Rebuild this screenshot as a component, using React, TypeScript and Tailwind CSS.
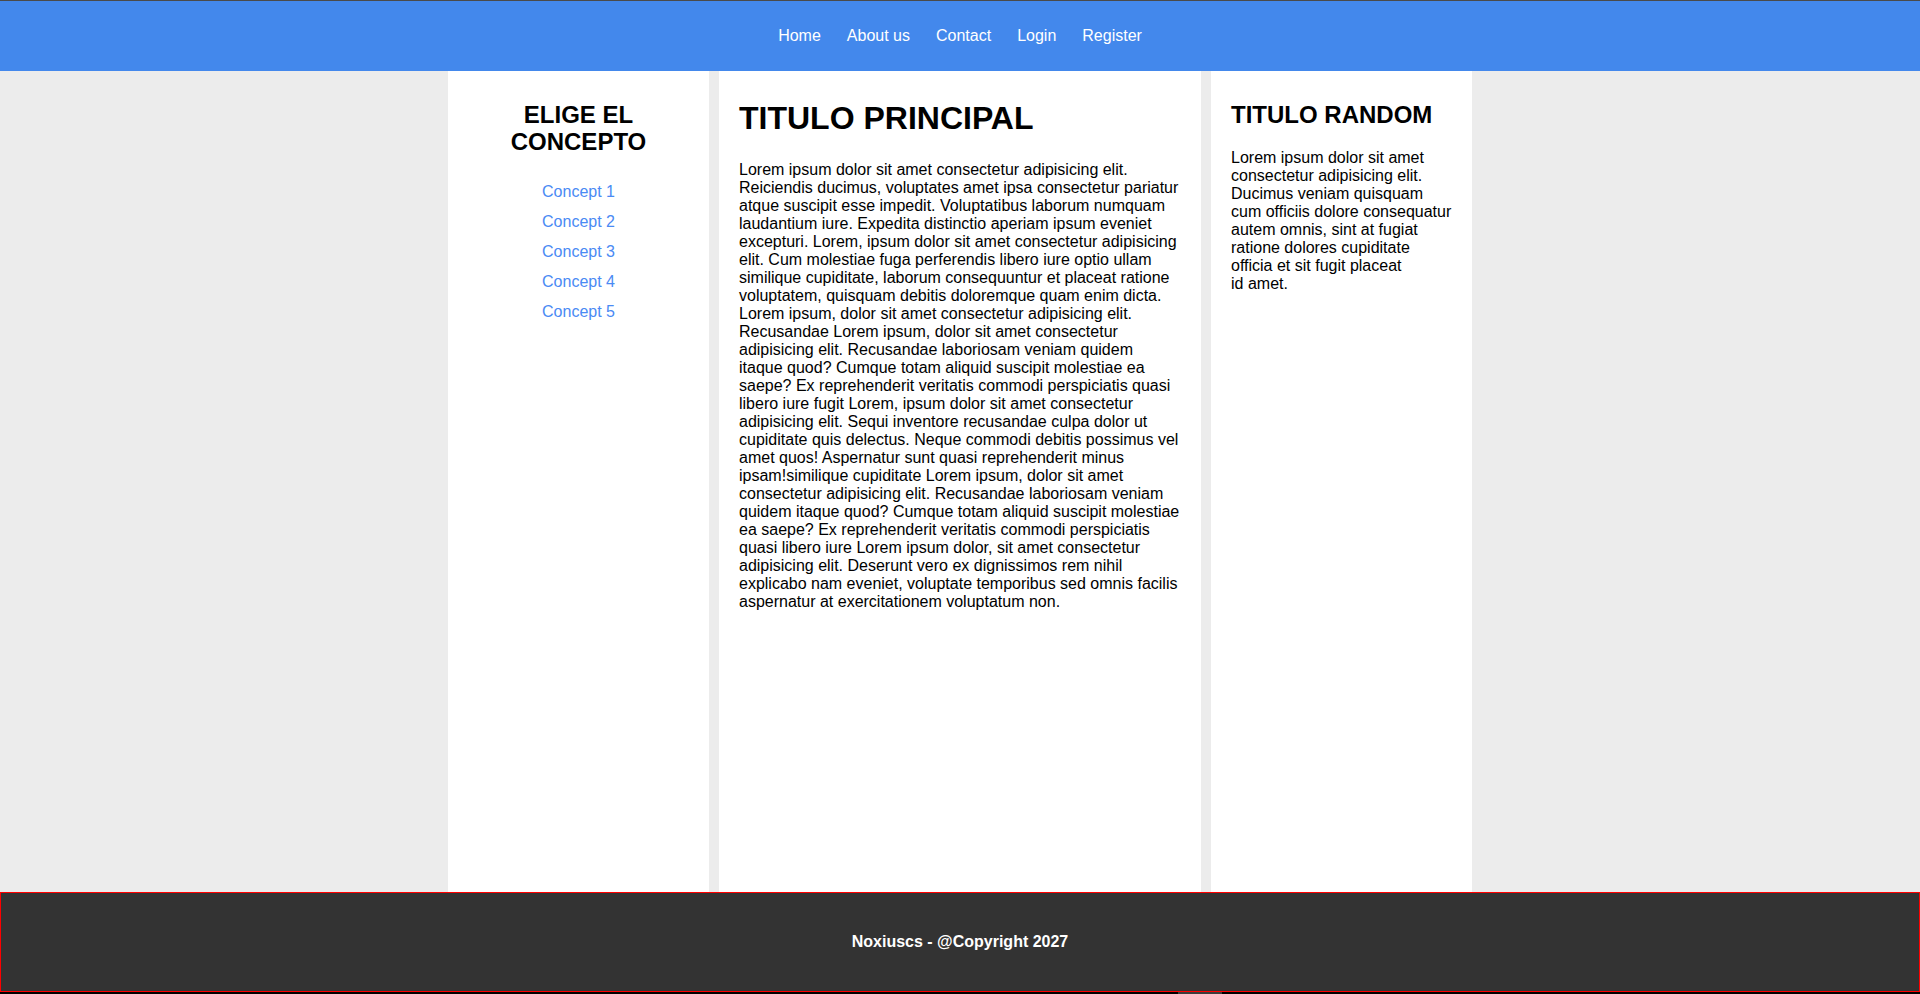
const NAV = ['Home', 'About us', 'Contact', 'Login', 'Register']
const CONCEPTS = ['Concept 1', 'Concept 2', 'Concept 3', 'Concept 4', 'Concept 5']

const MAIN_TEXT =
  'Lorem ipsum dolor sit amet consectetur adipisicing elit. Reiciendis ducimus, voluptates amet ipsa consectetur pariatur atque suscipit esse impedit. Voluptatibus laborum numquam laudantium iure. Expedita distinctio aperiam ipsum eveniet excepturi. Lorem, ipsum dolor sit amet consectetur adipisicing elit. Cum molestiae fuga perferendis libero iure optio ullam similique cupiditate, laborum consequuntur et placeat ratione voluptatem, quisquam debitis doloremque quam enim dicta. Lorem ipsum, dolor sit amet consectetur adipisicing elit. Recusandae Lorem ipsum, dolor sit amet consectetur adipisicing elit. Recusandae laboriosam veniam quidem itaque quod? Cumque totam aliquid suscipit molestiae ea saepe? Ex reprehenderit veritatis commodi perspiciatis quasi libero iure fugit Lorem, ipsum dolor sit amet consectetur adipisicing elit. Sequi inventore recusandae culpa dolor ut cupiditate quis delectus. Neque commodi debitis possimus vel amet quos! Aspernatur sunt quasi reprehenderit minus ipsam!similique cupiditate Lorem ipsum, dolor sit amet consectetur adipisicing elit. Recusandae laboriosam veniam quidem itaque quod? Cumque totam aliquid suscipit molestiae ea saepe? Ex reprehenderit veritatis commodi perspiciatis quasi libero iure Lorem ipsum dolor, sit amet consectetur adipisicing elit. Deserunt vero ex dignissimos rem nihil explicabo nam eveniet, voluptate temporibus sed omnis facilis aspernatur at exercitationem voluptatum non.'

export default function App() {
  return (
    <div className="flex h-screen flex-col bg-[#ececec] font-['Liberation_Sans',Arial,sans-serif] text-black">
      {/* cabecera */}
      <header className="flex h-[71px] flex-none items-center justify-center border-t border-[#4a4a4a] bg-[#4388ec]">
        <nav className="flex items-center gap-[26px] text-[16px] leading-[18px] text-white">
          {NAV.map((item) => (
            <a key={item} href="#">
              {item}
            </a>
          ))}
        </nav>
      </header>

      {/* columnas */}
      <main className="flex flex-1 justify-center gap-[10px]">
        <aside className="w-[261px] bg-white px-5 pt-[10px] text-center">
          <h2 className="mt-[20px] mb-[22px] text-[24px] font-bold leading-[27px]">ELIGE EL CONCEPTO</h2>
          <ul>
            {CONCEPTS.map((c) => (
              <li key={c} className="py-[6px] text-[16px] leading-[18px]">
                <a href="#" className="text-[#4a8af4]">
                  {c}
                </a>
              </li>
            ))}
          </ul>
        </aside>

        <section className="w-[482px] bg-white px-5 pt-[8px]">
          <h1 className="mt-[21px] mb-[24px] text-[32px] font-bold leading-[37px]">TITULO PRINCIPAL</h1>
          <p className="text-[16px] leading-[18px]">{MAIN_TEXT}</p>
        </section>

        <aside className="w-[261px] bg-white px-5 pt-[10px]">
          <h2 className="mt-[20px] mb-[21px] text-[24px] font-bold leading-[27px]">TITULO RANDOM</h2>
          <p className="text-[16px] leading-[18px]">
            Lorem ipsum dolor sit amet consectetur adipisicing elit. Ducimus veniam quisquam cum officiis dolore
            consequatur autem omnis, sint at fugiat ratione dolores cupiditate officia et sit fugit placeat
            <br />
            id amet.
          </p>
        </aside>
      </main>

      {/* pie */}
      <footer className="flex h-[100px] flex-none items-center justify-center border border-[#ff0000] bg-[#333333]">
        <p className="text-[16px] font-bold leading-[18px] text-white">Noxiuscs - @Copyright 2027</p>
      </footer>
      <div className="flex h-[2px] flex-none bg-black">
        <div className="ml-[1178px] w-[44px] bg-[#3c3c3c]" />
      </div>
    </div>
  )
}
